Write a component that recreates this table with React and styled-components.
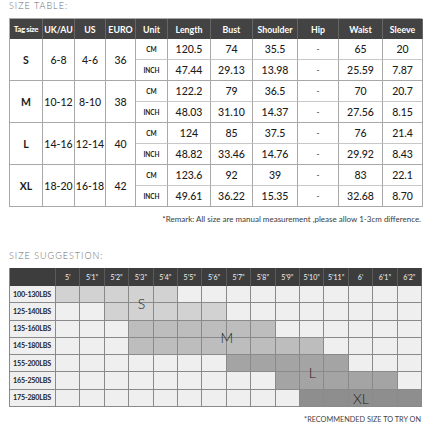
import React from "react";
import styled, { createGlobalStyle } from "styled-components";

const Global = createGlobalStyle`
  html, body { margin: 0; padding: 0; background: #fff; }
  body { font-family: Lato, "Open Sans", "Liberation Sans", sans-serif; color: #1b1b1b; }
`;

const Page = styled.div`
  width: 413px;
  padding-left: 9px;
  display: flex;
  flex-direction: column;
`;

const SectionTitle = styled.div`
  height: ${(p) => p.$h}px;
  font-size: 9px;
  line-height: 12px;
  padding-top: ${(p) => p.$pt}px;
  box-sizing: border-box;
  color: #6c6c6c;
  font-weight: 300;
  letter-spacing: 1px;
`;

const SizeGrid = styled.div`
  display: grid;
  grid-template-columns: 33px 32px 31px 30px 32px 43px 42px 45px 41px 44px 40px;
  grid-template-rows: 20px repeat(8, 21px);
  border-left: 1px solid #a8a8a8;
  border-top: 1px solid #a8a8a8;
  width: 413px;
  box-sizing: border-box;
`;

const Head = styled.div`
  background: #434343;
  color: #fff;
  font-weight: 700;
  font-size: ${(p) => p.$fs || 8.8}px;
  letter-spacing: ${(p) => p.$ls || 0}px;
  display: flex;
  align-items: center;
  justify-content: center;
  border-right: 1px solid #666;
  white-space: nowrap;
`;

const Cell = styled.div`
  display: flex;
  align-items: center;
  justify-content: center;
  border-right: 1px solid #a8a8a8;
  border-bottom: 1px solid ${(p) => (p.$sub ? "#c8c8c8" : "#a8a8a8")};
  grid-row: ${(p) => (p.$span ? "span 2" : "auto")};
  font-size: ${(p) => p.$fs || 10.5}px;
  font-weight: ${(p) => p.$fw || 500};
  color: #1b1b1b;
  white-space: nowrap;
`;

const Remark = styled.div`
  margin-top: 7px;
  text-align: right;
  font-size: 8px;
  line-height: 10px;
  color: #3a3a3a;
  padding-right: 1px;
`;

const Spacer = styled.div`
  height: ${(p) => p.$h}px;
`;

const SuggestGrid = styled.div`
  display: grid;
  grid-template-columns: 46px repeat(15, 1fr);
  grid-template-rows: 18px repeat(7, 1fr);
  height: 139px;
  width: 413px;
  box-sizing: border-box;
  border-left: 1px solid #8a8a8a;
`;

const HHead = styled.div`
  grid-row: 1;
  grid-column: ${(p) => p.$c};
  background: #3d3d3d;
  color: #f2f2f2;
  font-size: 7px;
  display: flex;
  align-items: center;
  justify-content: center;
  border-right: 1px solid #5a5a5a;
  white-space: nowrap;
`;

const Label = styled.div`
  grid-row: ${(p) => p.$r};
  grid-column: 1;
  background: #efefef;
  border-right: 1px solid #8a8a8a;
  border-bottom: 1px solid #8a8a8a;
  font-size: 7.2px;
  font-weight: 700;
  letter-spacing: -0.2px;
  display: flex;
  align-items: center;
  padding-left: 3px;
  color: #1e1e1e;
`;

const shades = ["#efefef", "#d2d2d2", "#bdbdbd", "#a4a4a4", "#8e8e8e"];

const Box = styled.div`
  grid-row: ${(p) => p.$r};
  grid-column: ${(p) => p.$c};
  background: ${(p) => shades[p.$s]};
  border-right: 1px solid #8a8a8a;
  border-bottom: 1px solid #8a8a8a;
`;

const Mark = styled.div`
  grid-row: ${(p) => p.$r};
  grid-column: ${(p) => p.$c};
  z-index: 1;
  display: flex;
  align-items: center;
  justify-content: center;
  font-size: 14px;
  font-weight: 300;
  color: #1e1e1e;
  pointer-events: none;
`;

const Foot = styled.div`
  margin-top: 8px;
  text-align: right;
  font-size: 7.3px;
  line-height: 10px;
  color: #444;
  padding-right: 1px;
`;

const heads = [
  ["Tag size", 8, -0.4],
  ["UK/AU"],
  ["US"],
  ["EURO"],
  ["Unit"],
  ["Length"],
  ["Bust"],
  ["Shoulder"],
  ["Hip"],
  ["Waist"],
  ["Sleeve"],
];

const sizes = [
  ["S", "6-8", "4-6", "36", ["120.5", "74", "35.5", "-", "65", "20"], ["47.44", "29.13", "13.98", "-", "25.59", "7.87"]],
  ["M", "10-12", "8-10", "38", ["122.2", "79", "36.5", "-", "70", "20.7"], ["48.03", "31.10", "14.37", "-", "27.56", "8.15"]],
  ["L", "14-16", "12-14", "40", ["124", "85", "37.5", "-", "76", "21.4"], ["48.82", "33.46", "14.76", "-", "29.92", "8.43"]],
  ["XL", "18-20", "16-18", "42", ["123.6", "92", "39", "-", "83", "22.1"], ["49.61", "36.22", "15.35", "-", "32.68", "8.70"]],
];

const heights = ["5’", "5’1”", "5’2”", "5’3”", "5’4”", "5’5”", "5’6”", "5’7”", "5’8”", "5’9”", "5’10”", "5’11”", "6’", "6’1”", "6’2”"];
const weights = ["100-130LBS", "125-140LBS", "135-160LBS", "145-180LBS", "155-200LBS", "165-250LBS", "175-280LBS"];
const ranges = [
  [0, 4, 1],
  [2, 6, 1],
  [3, 8, 2],
  [3, 10, 2],
  [7, 11, 3],
  [9, 13, 3],
  [10, 14, 4],
];

const marks = [
  ["S", "2 / 4", "5"],
  ["M", "4 / 6", "8 / 10"],
  ["L", "6 / 8", "12"],
  ["XL", "8", "14"],
];

export default function App() {
  return (
    <>
      <Global />
      <Page>
        <SectionTitle $h={18} $pt={0}>SIZE TABLE:</SectionTitle>
        <SizeGrid>
          {heads.map(([t, fs, ls]) => (
            <Head key={t} $fs={fs} $ls={ls}>{t}</Head>
          ))}
          {sizes.map(([tag, uk, us, eu, cm, inch]) => (
            <React.Fragment key={tag}>
              <Cell $span $fw={700} $fs={10.5}>{tag}</Cell>
              <Cell $span>{uk}</Cell>
              <Cell $span>{us}</Cell>
              <Cell $span>{eu}</Cell>
              <Cell $sub $fs={6.5} $fw={700}>CM</Cell>
              {cm.map((v, i) => (
                <Cell key={"c" + i} $sub $fs={v === "-" ? 8 : 10.5}>{v}</Cell>
              ))}
              <Cell $fs={6.5} $fw={700}>INCH</Cell>
              {inch.map((v, i) => (
                <Cell key={"i" + i} $fs={v === "-" ? 8 : 10.5}>{v}</Cell>
              ))}
            </React.Fragment>
          ))}
        </SizeGrid>
        <Remark>*Remark: All size are manual measurement ,please allow 1-3cm difference.</Remark>
        <Spacer $h={25} />
        <SectionTitle $h={19} $pt={1}>SIZE SUGGESTION:</SectionTitle>
        <SuggestGrid>
          <HHead $c={1} />
          {heights.map((h, i) => (
            <HHead key={h} $c={i + 2}>{h}</HHead>
          ))}
          {weights.map((w, r) => (
            <React.Fragment key={w}>
              <Label $r={r + 2}>{w}</Label>
              {heights.map((h, c) => {
                const [a, b, s] = ranges[r];
                return <Box key={h} $r={r + 2} $c={c + 2} $s={c >= a && c <= b ? s : 0} />;
              })}
            </React.Fragment>
          ))}
          {marks.map(([t, r, c]) => (
            <Mark key={t} $r={r} $c={c}>{t}</Mark>
          ))}
        </SuggestGrid>
        <Foot>*RECOMMENDED SIZE TO TRY ON</Foot>
      </Page>
    </>
  );
}
